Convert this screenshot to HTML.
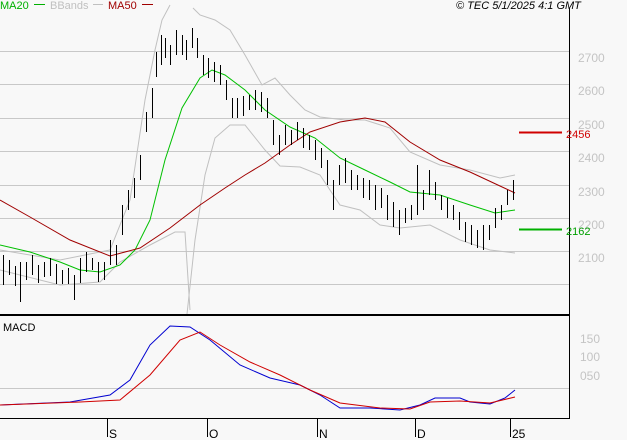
<!DOCTYPE html>
<html><head><meta charset="utf-8"><style>
body{margin:0;background:#f8f8f8;width:627px;height:440px;overflow:hidden;font-family:"Liberation Sans",sans-serif}
svg{display:block}
</style></head><body>
<svg width="627" height="440" viewBox="0 0 627 440" xmlns="http://www.w3.org/2000/svg">
<rect width="627" height="440" fill="#f8f8f8"/>
<g stroke="#c8c8c8" stroke-width="1" shape-rendering="crispEdges">
<line x1="0" y1="51.5" x2="569" y2="51.5"/><line x1="0" y1="84.5" x2="569" y2="84.5"/>
<line x1="0" y1="118.5" x2="569" y2="118.5"/><line x1="0" y1="151.5" x2="569" y2="151.5"/>
<line x1="0" y1="185.5" x2="569" y2="185.5"/><line x1="0" y1="218.5" x2="569" y2="218.5"/>
<line x1="0" y1="251.5" x2="569" y2="251.5"/><line x1="0" y1="284.5" x2="569" y2="284.5"/>
<line x1="0" y1="388.5" x2="569" y2="388.5"/>
</g>
<g fill="none" stroke="#c0c0c0" stroke-width="1">
<polyline points="0,250 60,260 110,250 130,200 145,100 155,50 162,20 170,5"/>
<polyline points="193,8 200,15 215,20 230,30 245,55 262,85 275,78 290,95 305,110 320,117 345,120 365,120 390,128 410,152 440,165 470,170 500,178 515,175"/>
<polyline points="0,270 60,285 100,282 120,262 150,245 175,232 185,232 190,310"/>
<polyline points="187,314 195,240 205,175 215,138 230,125 245,125 265,150 280,166 300,167 320,175 340,205 360,210 380,225 400,228 430,225 460,240 490,250 515,253"/>
</g>
<polyline fill="none" stroke="#00c000" stroke-width="1" points="0,245 30,252 60,262 80,270 100,272 120,265 135,250 150,220 165,160 182,108 200,78 212,70 225,75 245,90 265,110 290,127 315,138 340,158 365,170 390,182 410,192 440,195 470,205 495,213 515,210"/>
<polyline fill="none" stroke="#a00000" stroke-width="1" points="0,200 30,217 70,240 110,256 140,248 170,228 200,205 225,188 245,175 265,163 290,145 310,132 340,122 365,118 385,122 410,142 440,160 470,172 500,186 515,193"/>
<path fill="none" stroke="#000" stroke-width="1" shape-rendering="crispEdges" transform="translate(0.5,0)" d="
M3,255v30M9,260v15M15,266v20M20,262v40M26,262v18M32,255v20M38,265v18M44,262v15M50,258v18M56,264v20M62,270v14M68,268v16M74,275v25M80,258v25M86,252v20M92,258v12M98,262v20M104,262v18M110,240v25M116,245v20M122,205v30M128,190v20M134,178v20M140,155v25M146,112v20M152,88v30M156,52v25M161,35v30M165,38v20M170,45v20M176,30v25M182,35v20M186,40v20M192,28v20M197,38v20M203,55v20M208,58v20M214,62v20M220,65v20M226,80v20M232,98v20M237,98v20M243,96v20M249,95v15M255,90v20M261,92v20M267,98v20M273,120v25M279,135v20M285,125v20M291,130v15M297,122v18M303,128v20M309,135v15M315,140v20M321,148v20M327,160v25M333,180v30M339,165v20M345,158v25M351,170v20M357,175v15M363,178v20M369,180v20M375,185v25M381,188v20M387,195v25M393,202v25M399,210v25M405,208v15M411,205v15M417,165v50M423,190v20M429,170v25M435,182v18M441,195v15M447,198v20M453,205v15M459,212v18M465,222v20M471,225v20M477,230v18M483,225v25M489,225v15M495,208v20M501,205v15M507,190v15M513,180v20"/>
<line x1="569.5" y1="8" x2="569.5" y2="419" stroke="#000" shape-rendering="crispEdges"/>
<line x1="0" y1="315" x2="570" y2="315" stroke="#000" stroke-width="2" shape-rendering="crispEdges"/>
<line x1="0" y1="418.5" x2="570" y2="418.5" stroke="#000" shape-rendering="crispEdges"/>
<g stroke="#000" shape-rendering="crispEdges"><line x1="107.5" y1="419" x2="107.5" y2="437"/><line x1="207.5" y1="419" x2="207.5" y2="437"/><line x1="317.5" y1="419" x2="317.5" y2="437"/><line x1="415.5" y1="419" x2="415.5" y2="437"/><line x1="510.5" y1="419" x2="510.5" y2="437"/></g>
<g font-size="12" fill="#000"><text x="109" y="438">S</text><text x="209" y="438">O</text><text x="319" y="438">N</text><text x="417" y="438">D</text><text x="512" y="438">25</text></g>
<polyline fill="none" stroke="#0000d0" stroke-width="1" points="0,405 70,402 110,395 130,380 150,345 170,326 190,327 210,340 240,365 270,378 300,385 320,395 340,408 370,408 400,410 420,405 435,398 460,398 470,402 490,404 505,398 515,390"/>
<polyline fill="none" stroke="#d00000" stroke-width="1" points="0,405 80,402 120,400 150,375 180,340 200,332 220,345 250,362 280,375 310,390 340,403 380,408 410,409 430,402 460,401 490,403 515,397"/>
<text x="3" y="331" font-size="11" fill="#000">MACD</text>
<g font-size="12" fill="#c4c4c4"><text x="578" y="62">2700</text><text x="578" y="95">2600</text><text x="578" y="129">2500</text><text x="578" y="162">2400</text><text x="578" y="196">2300</text><text x="578" y="229">2200</text><text x="578" y="262">2100</text>
<text x="580" y="343">150</text><text x="580" y="361">100</text><text x="580" y="380">050</text></g>
<line x1="519" y1="132.5" x2="562" y2="132.5" stroke="#d00000" stroke-width="2"/>
<text x="566" y="138" font-size="11" fill="#d00000">2456</text>
<line x1="519" y1="229.5" x2="562" y2="229.5" stroke="#00b000" stroke-width="2"/>
<text x="566" y="235" font-size="11" fill="#00a000">2162</text>
<g font-size="11"><text x="0" y="9" fill="#00b000">MA20</text><line x1="34" y1="4.5" x2="45" y2="4.5" stroke="#00b000"/>
<text x="50" y="9" fill="#c0c0c0">BBands</text><line x1="93" y1="4.5" x2="103" y2="4.5" stroke="#c0c0c0"/>
<text x="108" y="9" fill="#a00000">MA50</text><line x1="142" y1="4.5" x2="153" y2="4.5" stroke="#a00000"/>
<text x="456" y="9" fill="#000" font-style="italic">© TEC 5/1/2025 4:1 GMT</text></g>
</svg>
</body></html>
